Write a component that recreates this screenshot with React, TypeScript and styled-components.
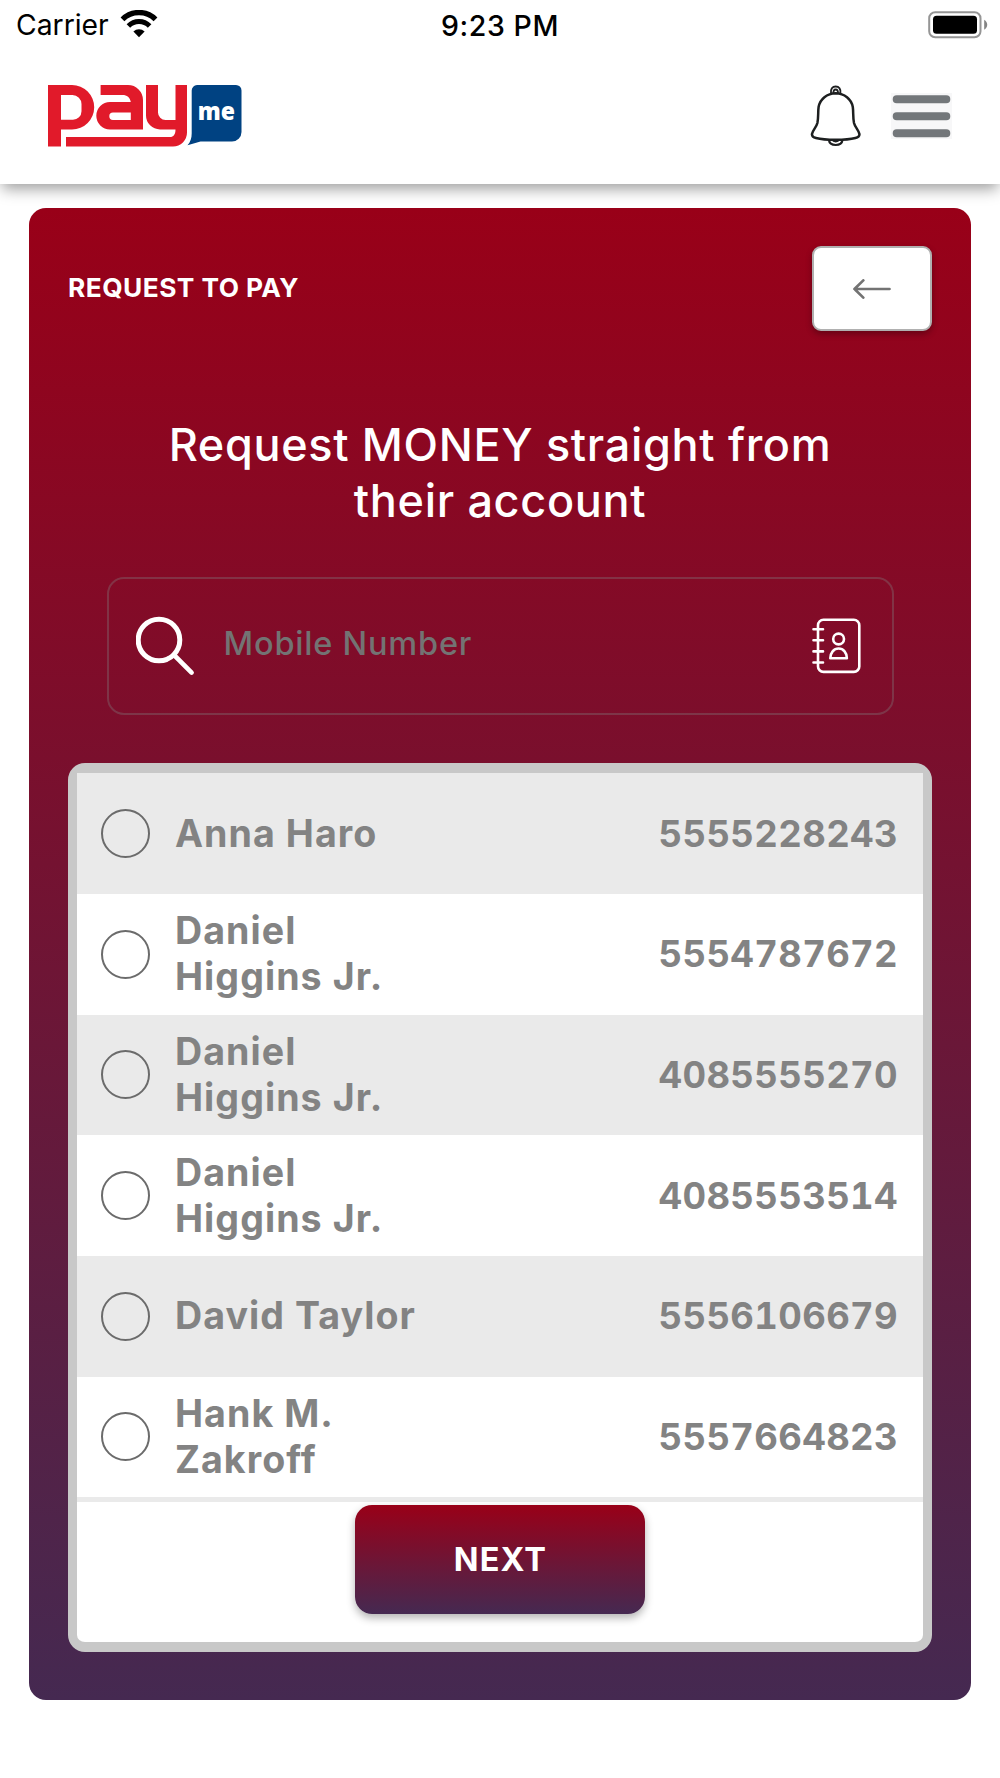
import React from 'react';
import styled, { createGlobalStyle } from 'styled-components';

const Global = createGlobalStyle`
  *, *::before, *::after { box-sizing: border-box; }
  body { margin: 0; background: #fff; font-family: Inter, "Liberation Sans", sans-serif; }
`;

const Screen = styled.div`
  width: 1000px;
  height: 1778px;
  display: flex;
  flex-direction: column;
  background: #fff;
  overflow: hidden;
`;

const Top = styled.header`
  flex: none;
  height: 184px;
  display: flex;
  flex-direction: column;
  box-shadow: 0 7px 14px -2px rgba(0, 0, 0, 0.38);
  clip-path: inset(0 0 -30px 0);
`;

const StatusBar = styled.div`
  height: 48px;
  display: grid;
  grid-template-columns: 1fr auto 1fr;
  align-items: center;
  padding: 2px 12px 0 16px;
  color: #000;
`;

const Carrier = styled.div`
  display: flex;
  align-items: center;
  gap: 11px;
  font-size: 28.3px;
  letter-spacing: 0;
  svg { margin-top: -3px; }
`;

const Clock = styled.div`
  margin-right: 4px;
  font-size: 28.5px;
  font-weight: 550;
  letter-spacing: 0.6px;
`;

const BatteryWrap = styled.div`
  display: flex;
  justify-content: flex-end;
`;

const NavBar = styled.div`
  flex: 1;
  display: flex;
  align-items: center;
  justify-content: space-between;
  padding: 0 48px 0 48px;
`;

const NavActions = styled.div`
  display: flex;
  align-items: center;
  gap: 30px;
`;

const IconButton = styled.button`
  display: flex;
  padding: 0;
  border: 0;
  background: none;
`;

const Card = styled.main`
  width: 942px;
  height: 1492px;
  margin: 24px 0 0 29px;
  padding: 38px 39px 0;
  border-radius: 17px;
  background: linear-gradient(180deg, #990018 0%, #452951 100%);
`;

const CardHead = styled.div`
  height: 86px;
  display: flex;
  justify-content: space-between;
`;

const Title = styled.h1`
  margin: 0;
  padding-top: 26px;
  font-size: 26.3px;
  line-height: 32px;
  font-weight: 700;
  letter-spacing: 0.45px;
  color: #fff;
`;

const BackButton = styled.button`
  width: 120px;
  height: 85px;
  display: flex;
  align-items: center;
  justify-content: center;
  padding: 0;
  border: 2px solid #b0b0b0;
  border-radius: 9px;
  background: #fff;
  box-shadow: 0 3px 6px rgba(0, 0, 0, 0.3);
`;

const Heading = styled.h2`
  margin: 85px 0 0;
  font-size: 45px;
  line-height: 55.6px;
  font-weight: 500;
  letter-spacing: 0.67px;
  text-align: center;
  color: #fff;
`;

const SearchBox = styled.label`
  width: 787px;
  height: 138px;
  margin: 49px auto 0;
  display: flex;
  align-items: center;
  padding: 0 31px 0 27px;
  border: 2px solid rgba(128, 128, 128, 0.34);
  border-radius: 17px;
`;

const SearchInput = styled.input`
  flex: 1;
  min-width: 0;
  margin: 0 0 6px 28px;
  padding: 0;
  border: 0;
  outline: 0;
  background: transparent;
  font: 500 32.5px Inter, "Liberation Sans", sans-serif;
  letter-spacing: 0.8px;
  color: #fff;
  &::placeholder { color: #737373; opacity: 1; }
`;

const Panel = styled.section`
  width: 864px;
  height: 889px;
  margin-top: 48px;
  border: solid #c8c8c8;
  border-width: 10px 9px;
  border-radius: 17px;
  background: #fff;
`;

const List = styled.ul`
  margin: 0;
  padding: 0;
  list-style: none;
  border-bottom: 5px solid #eaeaea;
`;

const Row = styled.li<{ $shaded: boolean }>`
  height: 120.7px;
  display: flex;
  align-items: center;
  padding: 0 25px 0 24px;
  background: ${(p) => (p.$shaded ? '#eaeaea' : '#fff')};
  font-size: 37.6px;
  line-height: 46px;
  font-weight: 700;
  color: #838383;
`;

const Radio = styled.span`
  flex: none;
  width: 49px;
  height: 49px;
  border: 2px solid #6b6b6b;
  border-radius: 50%;
`;

const Name = styled.span`
  width: 250px;
  margin-left: 25px;
  letter-spacing: 1.05px;
`;

const Phone = styled.span`
  margin-left: auto;
  font-size: 36.5px;
  font-variant-numeric: tabular-nums;
  letter-spacing: 0.35px;
`;

const Footer = styled.div`
  display: flex;
  justify-content: center;
  padding-top: 3px;
`;

const NextButton = styled.button`
  width: 290px;
  height: 109px;
  padding: 0;
  border: 0;
  border-radius: 17px;
  background: linear-gradient(180deg, #990018 0%, #452951 100%);
  box-shadow: 0 4px 8px rgba(0, 0, 0, 0.3);
  font: 700 32.5px Inter, "Liberation Sans", sans-serif;
  letter-spacing: 1.1px;
  text-indent: 1px;
  color: #fff;
`;

const BubbleText = styled.text`
  font: 800 24px "Open Sans", sans-serif;
  fill: #fff;
`;

const contacts = [
  { name: 'Anna Haro', phone: '5555228243' },
  { name: 'Daniel Higgins Jr.', phone: '5554787672' },
  { name: 'Daniel Higgins Jr.', phone: '4085555270' },
  { name: 'Daniel Higgins Jr.', phone: '4085553514' },
  { name: 'David Taylor', phone: '5556106679' },
  { name: 'Hank M. Zakroff', phone: '5557664823' },
];

const Wifi = () => (
  <svg width="38" height="28" viewBox="0 0 38 28" fill="none" stroke="#000">
    <path d="M2.500 9.300a23.500 23.500 0 0 1 33 0" strokeWidth="5.400" />
    <path d="M8.400 15.900a15 15 0 0 1 21.200 0" strokeWidth="5" />
    <path d="M19 27.300l-5.600-5.700a8 8 0 0 1 11.200 0z" fill="#000" stroke="none" />
  </svg>
);

const Battery = () => (
  <svg width="60" height="28" viewBox="0 0 60 28">
    <rect x="1.200" y="1.200" width="51.300" height="25" rx="6" fill="none" stroke="#959595" strokeWidth="2" />
    <rect x="5" y="4.700" width="44" height="18" rx="3.500" fill="#000" />
    <path d="M56.200 8.800c4 2.200 4 7.800 0 10z" fill="#848484" />
  </svg>
);

const Logo = () => (
  <svg width="194" height="62" viewBox="0 0 194 62">
    <g fill="#e11a2a" fillRule="evenodd">
      <path d="M0 0h24a22.200 22.200 0 0 1 0 44.400H13V61.500H0zM13 10v24.700h12a8.500 8.500 0 0 0 8.500-8.500V19A9 9 0 0 0 24.500 10z" />
      <path d="M52.600 0H80a15 15 0 0 1 15 15V44.400H62a13.700 13.700 0 0 1 0-27.400H82.800C82 12.500 79 10 74.500 10H52.600zM65 27.500a3.700 3.700 0 0 0 0 7.400H82.800V27.500z" />
      <path d="M98 0h12v27.500a7.500 7.500 0 0 0 7.500 7.500h10V0H139V47.500a14 14 0 0 1-14 14H18V52H122c3.500 0 5.500-3 5.500-7.600H112a14 14 0 0 1-14-14z" />
    </g>
    <path d="M149 0h39a5.500 5.500 0 0 1 5.500 5.500V47a9.500 9.500 0 0 1-9.500 9.500H152.500l-13 3.800c3-3.300 4.200-7.300 4.200-12V5.500A5.500 5.500 0 0 1 149 0z" fill="#004282" />
    <BubbleText x="149.800" y="34.800" textLength="37.200" lengthAdjust="spacingAndGlyphs">me</BubbleText>
  </svg>
);

const Bell = () => (
  <svg width="52" height="62" viewBox="0 0 52 62" fill="none" stroke="#1d1f20" strokeWidth="2.500" strokeLinejoin="round">
    <path d="M26.700 8.300C18 8.500 11 14 9.600 22 8.900 27 9.600 32 8.400 38 7.300 42.500 3.500 45.500 3 49c-.3 2.300 1 3.300 4 4 5 1.300 12 1.800 19.700 1.800s14.700-.5 19.700-1.800c3-.7 4.300-1.700 4-4-.5-3.500-4.300-6.500-5.400-11C43.800 32 44.500 27 43.800 22 42.400 14 35.400 8.500 26.700 8.300z" />
    <path d="M22 8.400C21.300 4 23.500 1.500 26.700 1.500S32.100 4 31.400 8.400M24.600 8c-.4-2.300.4-3.500 2.100-3.500S29.200 5.700 28.800 8" strokeWidth="1.900" />
    <path d="M19.700 54.500c.5 3.800 3.500 5.500 7 5.500s6.500-1.700 7-5.500M23.200 54.800c1.500 2.200 5.500 2.200 7 0" strokeWidth="2" />
  </svg>
);

const Menu = () => (
  <svg width="61" height="46" viewBox="0 0 61 46">
    <rect width="61" height="46" fill="#f7f7f8" />
    <g stroke="#73777a" strokeWidth="8" strokeLinecap="round">
      <path d="M5.700 6.200H55.300M5.700 23.200H55.300M5.700 40.200H55.300" />
    </g>
  </svg>
);

const Arrow = () => (
  <svg width="38" height="20" viewBox="0 0 38 20" fill="none" stroke="#737373" strokeWidth="2.700" strokeLinecap="round" strokeLinejoin="round">
    <path d="M36.500 10H1.500M10.300 1.400L1.500 10l8.800 8.600" />
  </svg>
);

const Magnifier = () => (
  <svg width="60" height="60" viewBox="0 0 60 60" fill="none" stroke="#fff" strokeLinecap="round">
    <circle cx="23" cy="24" r="20.800" strokeWidth="5" />
    <path d="M38.500 39.500L55.600 56.600" strokeWidth="4.600" />
  </svg>
);

const AddressBook = () => (
  <svg width="49" height="56" viewBox="0 0 49 56" fill="none" stroke="#fff" strokeWidth="2.600" strokeLinecap="round" strokeLinejoin="round">
    <rect x="6" y="1.700" width="41.300" height="52.200" rx="5.500" />
    <path d="M1.500 11.300H11M1.500 22.300H11M1.500 33.400H11M1.500 44.500H11" />
    <circle cx="26.600" cy="21" r="5.400" />
    <path d="M18.300 40.300c0-5.500 3.500-9.800 8.300-9.800s8.300 4.300 8.300 9.800z" />
  </svg>
);

export default function App() {
  return (
    <Screen>
      <Global />
      <Top>
        <StatusBar>
          <Carrier>Carrier<Wifi /></Carrier>
          <Clock>9:23 PM</Clock>
          <BatteryWrap><Battery /></BatteryWrap>
        </StatusBar>
        <NavBar>
          <Logo />
          <NavActions>
            <IconButton aria-label="Notifications"><Bell /></IconButton>
            <IconButton aria-label="Menu"><Menu /></IconButton>
          </NavActions>
        </NavBar>
      </Top>
      <Card>
        <CardHead>
          <Title>REQUEST TO PAY</Title>
          <BackButton aria-label="Back"><Arrow /></BackButton>
        </CardHead>
        <Heading>Request MONEY straight from<br />their account</Heading>
        <SearchBox>
          <Magnifier />
          <SearchInput placeholder="Mobile Number" />
          <AddressBook />
        </SearchBox>
        <Panel>
          <List>
            {contacts.map((c, i) => (
              <Row key={c.phone} $shaded={i % 2 === 0}>
                <Radio />
                <Name>{c.name}</Name>
                <Phone>{c.phone}</Phone>
              </Row>
            ))}
          </List>
          <Footer>
            <NextButton>NEXT</NextButton>
          </Footer>
        </Panel>
      </Card>
    </Screen>
  );
}
